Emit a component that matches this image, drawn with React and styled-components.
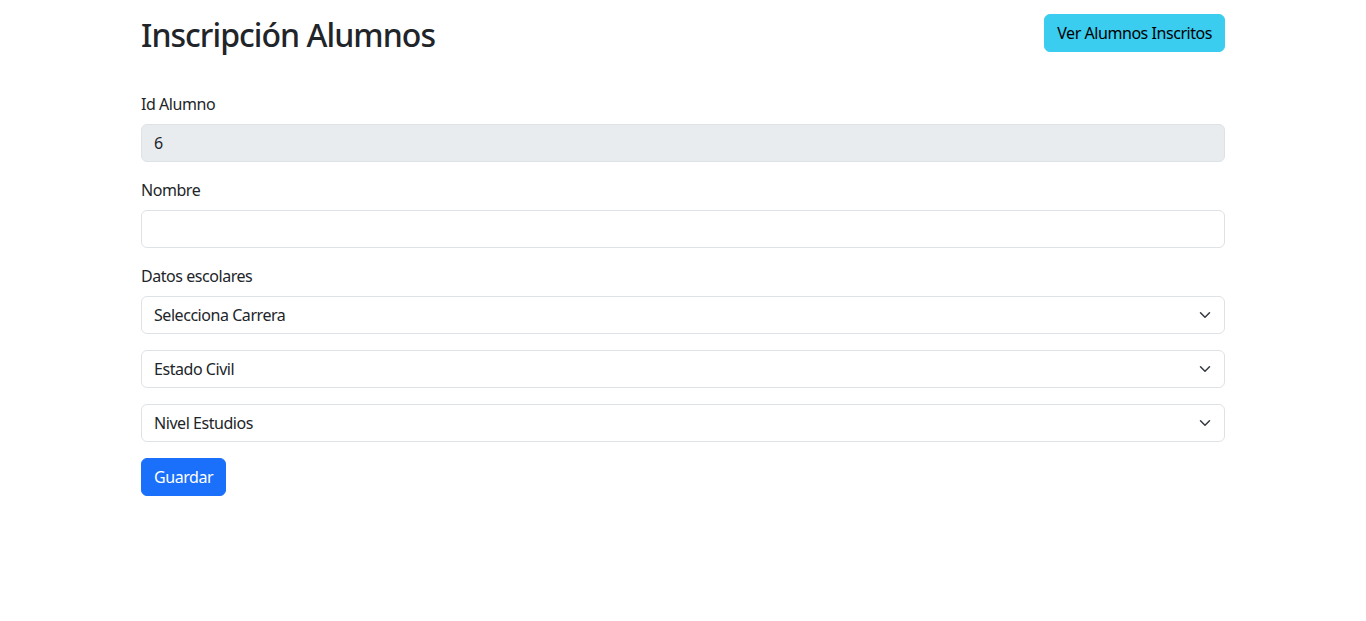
import styled, { createGlobalStyle } from 'styled-components';

const GlobalStyle = createGlobalStyle`
  body {
    margin: 0;
    background: #fff;
    color: #212529;
    font-family: "Noto Sans", "Open Sans", sans-serif;
    font-size: 16px;
    line-height: 1.5;
    letter-spacing: -0.45px;
  }
  * { box-sizing: border-box; }
`;

const Page = styled.div`
  max-width: 1084px;
  margin: 0 auto;
  padding-top: 14px;
`;

const Header = styled.div`
  display: flex;
  justify-content: space-between;
  align-items: flex-start;
  margin-bottom: 38px;
`;

const Title = styled.h2`
  margin: 2px 0 0;
  font-size: 32px;
  font-weight: 500;
  line-height: 1.2;
  letter-spacing: -0.95px;
`;

const Button = styled.button`
  display: inline-block;
  font-family: inherit;
  font-size: 16px;
  line-height: 1.5;
  letter-spacing: inherit;
  padding: 6px 12px;
  border-radius: 6px;
  border: 1px solid ${(p) => (p.$variant === 'info' ? '#3acdef' : '#1a6ffb')};
  background: ${(p) => (p.$variant === 'info' ? '#3acdef' : '#1a6ffb')};
  color: ${(p) => (p.$variant === 'info' ? '#000' : '#fff')};
  cursor: pointer;
`;

const Field = styled.div`
  margin-bottom: 16px;
`;

const Label = styled.label`
  display: block;
  margin-bottom: 8px;
`;

const Input = styled.input`
  display: block;
  width: 100%;
  padding: 6px 12px;
  font-family: inherit;
  font-size: 16px;
  line-height: 1.5;
  letter-spacing: inherit;
  color: #212529;
  background: ${(p) => (p.disabled ? '#e9ecef' : '#fff')};
  border: 1px solid #dee2e6;
  border-radius: 6px;
  outline: none;
`;

const SelectWrap = styled.div`
  position: relative;
  margin-bottom: 16px;
`;

const Select = styled.select`
  display: block;
  width: 100%;
  padding: 6px 36px 6px 12px;
  font-family: inherit;
  font-size: 16px;
  line-height: 1.5;
  letter-spacing: inherit;
  color: #212529;
  background: #fff;
  border: 1px solid #dee2e6;
  border-radius: 6px;
  appearance: none;
  outline: none;
`;

const Chevron = styled.svg`
  position: absolute;
  right: 12px;
  top: 50%;
  transform: translateY(-50%);
  pointer-events: none;
`;

function SelectField({ children }) {
  return (
    <SelectWrap>
      <Select defaultValue="">
        <option value="">{children}</option>
      </Select>
      <Chevron width="16" height="12" viewBox="0 0 16 16">
        <path d="m2 5 6 6 6-6" fill="none" stroke="#343a40" strokeWidth="2" strokeLinecap="round" strokeLinejoin="round" />
      </Chevron>
    </SelectWrap>
  );
}

export default function App() {
  return (
    <>
      <GlobalStyle />
      <Page>
        <Header>
          <Title>Inscripción Alumnos</Title>
          <Button $variant="info">Ver Alumnos Inscritos</Button>
        </Header>
        <Field>
          <Label>Id Alumno</Label>
          <Input value="6" disabled readOnly />
        </Field>
        <Field>
          <Label>Nombre</Label>
          <Input type="text" />
        </Field>
        <Label>Datos escolares</Label>
        <SelectField>Selecciona Carrera</SelectField>
        <SelectField>Estado Civil</SelectField>
        <SelectField>Nivel Estudios</SelectField>
        <Button $variant="primary">Guardar</Button>
      </Page>
    </>
  );
}
